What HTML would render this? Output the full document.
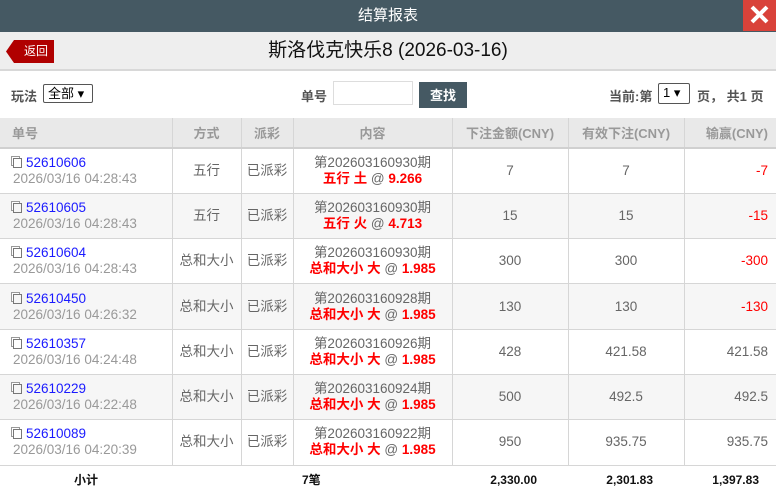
<!DOCTYPE html>
<html><head><meta charset="utf-8"><style>
*{margin:0;padding:0;box-sizing:border-box}
body{width:776px;height:495px;overflow:hidden;background:#fff;font-family:"Liberation Sans","Noto Sans CJK SC",sans-serif;font-size:13px;color:#555;position:relative}
.top{height:32px;background:#455963;color:#fff;text-align:center;line-height:32px;font-size:15px;position:relative}
.x{position:absolute;right:0;top:0;width:33px;height:31px;background:#d9423a;}
.sub{height:39px;background:#eee;border-bottom:2px solid #d8d8d8;position:relative;text-align:center;line-height:38px;font-size:19px;color:#111}
.back{position:absolute;left:6px;top:8px;height:23px;width:48px;background:#b00000;color:#fff;font-size:12px;line-height:23px;text-align:right;padding-right:6px;clip-path:polygon(8px 0,100% 0,100% 100%,8px 100%,0 50%)}
.bar{height:47px;position:relative;font-size:13px;color:#555;font-weight:bold}
.bar span,.bar div{position:absolute}
.sel{border:1px solid #555;border-radius:2px;height:19px;font-weight:normal;color:#000;font-size:13px;line-height:17px;padding-left:4px;background:#fff}
table{border-collapse:collapse;width:776px;table-layout:fixed}
th{height:30px;background:#e9e9e9;color:#999;font-weight:bold;font-size:13px;border-left:1px solid #d6d6d6;border-bottom:2px solid #d0d0d0;text-align:center}
th:first-child{border-left:none;text-align:left;padding-left:12px}
th:last-child{text-align:right;padding-right:8px}
td{height:45.3px;border-left:1px solid #d6d6d6;border-bottom:1px solid #d6d6d6;text-align:center;font-size:13.5px;color:#666;line-height:16px}
td:first-child{border-left:none;text-align:left;padding-left:13px;color:#999}
td:last-child{text-align:right;padding-right:8px}
tr.g td{background:#f6f6f6}
a{color:#1a1aff;text-decoration:none}
.ic{display:inline-block;width:9px;height:10px;border:1px solid #777;margin-right:4px;position:relative;top:1px;box-shadow:-2px -2px 0 -1px #fff,-2px -2px 0 0 #999}
.r{color:#f00;font-weight:bold}
.at{color:#666;font-weight:normal}
.neg{color:#f00}
.ft td{border:none;height:30px;color:#111;font-weight:bold;font-size:12px}
</style></head><body>
<div class="top">结算报表<div class="x"><svg width="33" height="31"><path d="M9 7L24 22M24 7L9 22" stroke="#fff" stroke-width="4"/></svg></div></div>
<div class="sub"><div class="back">返回</div>斯洛伐克快乐8 (2026-03-16)</div>
<div class="bar">
<span style="left:11px;top:15px">玩法</span>
<div class="sel" style="left:43px;top:13px;width:50px">全部 ▾</div>
<span style="left:301px;top:15px">单号</span>
<div style="left:333px;top:10px;width:80px;height:24px;border:1px solid #ddd"></div>
<div style="left:419px;top:11px;width:48px;height:26px;background:#455963;color:#fff;text-align:center;line-height:27px;font-weight:bold">查找</div>
<span style="left:609px;top:15px">当前:第</span>
<div class="sel" style="left:658px;top:12px;width:32px;height:21px">1 ▾</div>
<span style="left:697px;top:15px">页， 共1 页</span>
</div>
<table>
<colgroup><col style="width:172px"><col style="width:69px"><col style="width:52px"><col style="width:159px"><col style="width:116px"><col style="width:116px"><col style="width:92px"></colgroup>
<tr><th>单号</th><th>方式</th><th>派彩</th><th>内容</th><th>下注金额(CNY)</th><th>有效下注(CNY)</th><th>输赢(CNY)</th></tr>
<tr><td><span class="ic"></span><a>52610606</a><br>2026/03/16 04:28:43</td><td>五行</td><td>已派彩</td><td>第202603160930期<br><span class="r">五行 土 <span class="at">@</span> 9.266</span></td><td>7</td><td>7</td><td class="neg">-7</td></tr>
<tr class="g"><td><span class="ic"></span><a>52610605</a><br>2026/03/16 04:28:43</td><td>五行</td><td>已派彩</td><td>第202603160930期<br><span class="r">五行 火 <span class="at">@</span> 4.713</span></td><td>15</td><td>15</td><td class="neg">-15</td></tr>
<tr><td><span class="ic"></span><a>52610604</a><br>2026/03/16 04:28:43</td><td>总和大小</td><td>已派彩</td><td>第202603160930期<br><span class="r">总和大小 大 <span class="at">@</span> 1.985</span></td><td>300</td><td>300</td><td class="neg">-300</td></tr>
<tr class="g"><td><span class="ic"></span><a>52610450</a><br>2026/03/16 04:26:32</td><td>总和大小</td><td>已派彩</td><td>第202603160928期<br><span class="r">总和大小 大 <span class="at">@</span> 1.985</span></td><td>130</td><td>130</td><td class="neg">-130</td></tr>
<tr><td><span class="ic"></span><a>52610357</a><br>2026/03/16 04:24:48</td><td>总和大小</td><td>已派彩</td><td>第202603160926期<br><span class="r">总和大小 大 <span class="at">@</span> 1.985</span></td><td>428</td><td>421.58</td><td>421.58</td></tr>
<tr class="g"><td><span class="ic"></span><a>52610229</a><br>2026/03/16 04:22:48</td><td>总和大小</td><td>已派彩</td><td>第202603160924期<br><span class="r">总和大小 大 <span class="at">@</span> 1.985</span></td><td>500</td><td>492.5</td><td>492.5</td></tr>
<tr><td><span class="ic"></span><a>52610089</a><br>2026/03/16 04:20:39</td><td>总和大小</td><td>已派彩</td><td>第202603160922期<br><span class="r">总和大小 大 <span class="at">@</span> 1.985</span></td><td>950</td><td>935.75</td><td>935.75</td></tr>
<tr class="ft"><td style="text-align:center;padding-left:0;color:#111">小计</td><td></td><td colspan="2" style="text-align:left;padding-left:61px">7笔</td><td style="text-align:right;padding-right:31px">2,330.00</td><td style="text-align:right;padding-right:31px">2,301.83</td><td style="text-align:right;padding-right:17px">1,397.83</td></tr>
</table>
</body></html>
